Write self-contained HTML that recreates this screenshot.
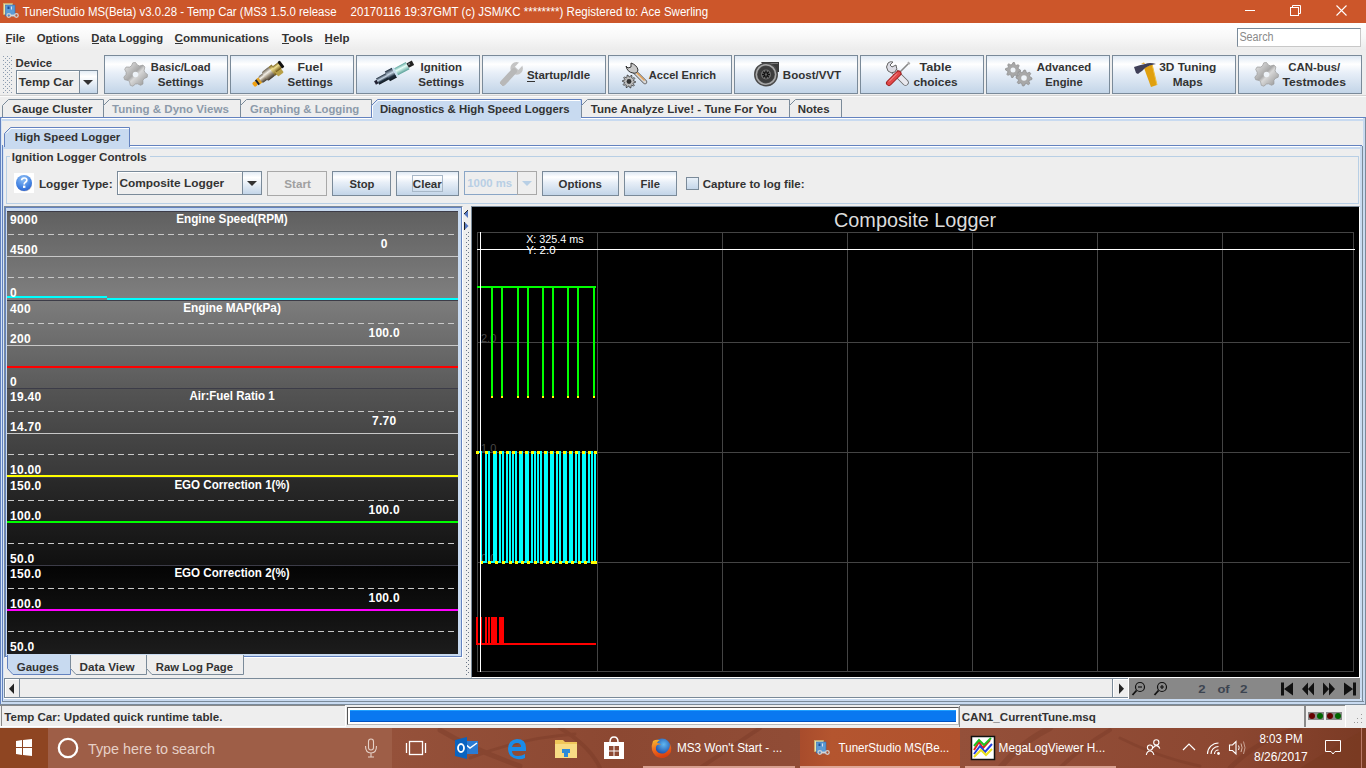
<!DOCTYPE html><html><head><meta charset="utf-8"><style>
html,body{margin:0;padding:0;}
body{width:1366px;height:768px;overflow:hidden;position:relative;background:#eeeeee;font-family:"Liberation Sans",sans-serif;font-size:12px;color:#333;}
div{position:absolute;box-sizing:border-box;}
svg{position:absolute;overflow:visible;}
.btn{border:1px solid #7a8a99;background:linear-gradient(to bottom,#dfe9f4 0%,#ffffff 22%,#e8eff8 45%,#c3d5e8 100%);}
</style></head><body>
<div style="left:0px;top:0px;width:1366px;height:23px;background:#cc562a;"></div>
<svg style="left:3px;top:3px" width="16" height="16" viewBox="0 0 16 16">
<rect x="0.5" y="0.5" width="9" height="11" fill="#efe3a8" stroke="#c9b870" stroke-width="0.6"/><rect x="2.5" y="2" width="9.5" height="11" fill="#5b9bd5" stroke="#2f6db5" stroke-width="0.6"/>
<rect x="4.5" y="3.5" width="2" height="2.5" fill="#1f4f98"/><rect x="8" y="3.5" width="1" height="3" fill="#dde"/>
<path d="M7 12.5 h5" stroke="#d8d8d8" stroke-width="1.8"/><circle cx="5.8" cy="12.5" r="1.8" fill="none" stroke="#d0d0d0" stroke-width="1.3"/><circle cx="13.4" cy="12.5" r="1.8" fill="none" stroke="#d0d0d0" stroke-width="1.3"/></svg>
<div style="left:1245px;top:10px;width:10px;height:1px;background:#fff;"></div>
<svg style="left:1290px;top:5px" width="12" height="12"><rect x="0.5" y="2.5" width="8" height="8" fill="none" stroke="#fff"/><path d="M2.5 2.5 V0.5 H10.5 V8.5 H8.5" fill="none" stroke="#fff"/></svg>
<svg style="left:1336px;top:5px" width="12" height="12"><path d="M0.5 0.5 L10.5 10.5 M10.5 0.5 L0.5 10.5" stroke="#fff" stroke-width="1.1"/></svg>
<div style="left:0px;top:23px;width:1366px;height:27px;background:linear-gradient(to bottom,#ffffff 0%,#f8f8f8 50%,#ececec 100%);"></div>
<div style="left:6px;top:43px;width:5px;height:1px;background:#333;"></div>
<div style="left:47px;top:43px;width:6px;height:1px;background:#333;"></div>
<div style="left:92px;top:43px;width:7px;height:1px;background:#333;"></div>
<div style="left:175px;top:43px;width:8px;height:1px;background:#333;"></div>
<div style="left:282px;top:43px;width:7px;height:1px;background:#333;"></div>
<div style="left:325px;top:43px;width:7px;height:1px;background:#333;"></div>
<div style="left:1237px;top:28px;width:124px;height:19px;background:#fff;border:1px solid #7a8a99;border-right-color:#c8c8c8;border-bottom-color:#c8c8c8;"></div>
<svg style="left:2px;top:55px" width="12" height="39"><rect x="1" y="1" width="1" height="1" fill="#8c9cb0"/><rect x="5" y="1" width="1" height="1" fill="#8c9cb0"/><rect x="9" y="1" width="1" height="1" fill="#8c9cb0"/><rect x="3" y="3" width="1" height="1" fill="#8c9cb0"/><rect x="7" y="3" width="1" height="1" fill="#8c9cb0"/><rect x="1" y="5" width="1" height="1" fill="#8c9cb0"/><rect x="5" y="5" width="1" height="1" fill="#8c9cb0"/><rect x="9" y="5" width="1" height="1" fill="#8c9cb0"/><rect x="3" y="7" width="1" height="1" fill="#8c9cb0"/><rect x="7" y="7" width="1" height="1" fill="#8c9cb0"/><rect x="1" y="9" width="1" height="1" fill="#8c9cb0"/><rect x="5" y="9" width="1" height="1" fill="#8c9cb0"/><rect x="9" y="9" width="1" height="1" fill="#8c9cb0"/><rect x="3" y="11" width="1" height="1" fill="#8c9cb0"/><rect x="7" y="11" width="1" height="1" fill="#8c9cb0"/><rect x="1" y="13" width="1" height="1" fill="#8c9cb0"/><rect x="5" y="13" width="1" height="1" fill="#8c9cb0"/><rect x="9" y="13" width="1" height="1" fill="#8c9cb0"/><rect x="3" y="15" width="1" height="1" fill="#8c9cb0"/><rect x="7" y="15" width="1" height="1" fill="#8c9cb0"/><rect x="1" y="17" width="1" height="1" fill="#8c9cb0"/><rect x="5" y="17" width="1" height="1" fill="#8c9cb0"/><rect x="9" y="17" width="1" height="1" fill="#8c9cb0"/><rect x="3" y="19" width="1" height="1" fill="#8c9cb0"/><rect x="7" y="19" width="1" height="1" fill="#8c9cb0"/><rect x="1" y="21" width="1" height="1" fill="#8c9cb0"/><rect x="5" y="21" width="1" height="1" fill="#8c9cb0"/><rect x="9" y="21" width="1" height="1" fill="#8c9cb0"/><rect x="3" y="23" width="1" height="1" fill="#8c9cb0"/><rect x="7" y="23" width="1" height="1" fill="#8c9cb0"/><rect x="1" y="25" width="1" height="1" fill="#8c9cb0"/><rect x="5" y="25" width="1" height="1" fill="#8c9cb0"/><rect x="9" y="25" width="1" height="1" fill="#8c9cb0"/><rect x="3" y="27" width="1" height="1" fill="#8c9cb0"/><rect x="7" y="27" width="1" height="1" fill="#8c9cb0"/><rect x="1" y="29" width="1" height="1" fill="#8c9cb0"/><rect x="5" y="29" width="1" height="1" fill="#8c9cb0"/><rect x="9" y="29" width="1" height="1" fill="#8c9cb0"/><rect x="3" y="31" width="1" height="1" fill="#8c9cb0"/><rect x="7" y="31" width="1" height="1" fill="#8c9cb0"/><rect x="1" y="33" width="1" height="1" fill="#8c9cb0"/><rect x="5" y="33" width="1" height="1" fill="#8c9cb0"/><rect x="9" y="33" width="1" height="1" fill="#8c9cb0"/><rect x="3" y="35" width="1" height="1" fill="#8c9cb0"/><rect x="7" y="35" width="1" height="1" fill="#8c9cb0"/><rect x="1" y="37" width="1" height="1" fill="#8c9cb0"/><rect x="5" y="37" width="1" height="1" fill="#8c9cb0"/><rect x="9" y="37" width="1" height="1" fill="#8c9cb0"/></svg>
<div style="left:16px;top:70px;width:64px;height:24px;background:#eeeeee;border:1px solid #7a8a99;"></div>
<div style="left:17px;top:71px;width:62px;height:1px;background:#fff;"></div>
<div style="left:17px;top:71px;width:1px;height:22px;background:#fff;"></div>
<div style="left:79px;top:70px;width:19px;height:24px;border:1px solid #7a8a99;background:linear-gradient(to bottom,#e3ecf5,#fff 25%,#c4d6e9);"></div>
<svg style="left:83px;top:80px" width="11" height="6"><path d="M0 0 H10 L5 5 Z" fill="#333"/></svg>
<div class="btn" style="left:104px;top:55px;width:124px;height:39px;"></div>
<svg style="left:123px;top:62px" width="25" height="25"><defs><linearGradient id="gg0" x1="0" y1="0" x2="1" y2="1"><stop offset="0" stop-color="#f0f0f0"/><stop offset="0.45" stop-color="#a8a8a8"/><stop offset="0.55" stop-color="#d8d8d8"/><stop offset="1" stop-color="#8a8a8a"/></linearGradient></defs><polygon points="24.5,12.5 24.2,15.2 21.1,16.6 19.9,18.4 20.0,21.9 17.7,23.3 14.6,21.8 12.5,22.0 9.8,24.2 7.3,23.3 6.6,19.9 5.1,18.4 1.7,17.7 0.8,15.2 3.0,12.5 3.2,10.4 1.7,7.3 3.1,5.0 6.6,5.1 8.4,3.9 9.8,0.8 12.5,0.5 14.6,3.2 16.6,3.9 20.0,3.1 21.9,5.0 21.1,8.4 21.8,10.4" fill="url(#gg0)" stroke="#999" stroke-width="0.7"/><circle cx="12.5" cy="12.5" r="2.8" fill="#eef3f8"/></svg>
<div class="btn" style="left:230px;top:55px;width:124px;height:39px;"></div>
<svg style="left:248px;top:58px" width="40" height="32"><defs><linearGradient id="inj" x1="0" y1="0" x2="0" y2="1"><stop offset="0" stop-color="#6a6050"/><stop offset="0.35" stop-color="#f4f0e8"/><stop offset="0.6" stop-color="#a89c88"/><stop offset="1" stop-color="#3a3228"/></linearGradient><linearGradient id="brs" x1="0" y1="0" x2="0" y2="1"><stop offset="0" stop-color="#7a6420"/><stop offset="0.35" stop-color="#f0e090"/><stop offset="1" stop-color="#6a5010"/></linearGradient></defs><g transform="translate(7,26) rotate(-37)"><rect x="-2" y="-2.5" width="4" height="5" rx="1.5" fill="#f0a010"/><rect x="2" y="-3" width="2.5" height="6" fill="#222"/><rect x="4" y="-3.2" width="3" height="6.4" fill="#e0a020"/><rect x="6.5" y="-4" width="7" height="8" rx="2" fill="url(#inj)"/><rect x="12" y="-5.5" width="10" height="11" rx="2" fill="url(#inj)"/><rect x="21" y="-5.5" width="4" height="11" fill="url(#brs)"/><rect x="23" y="2" width="7" height="6" rx="1" fill="#b8a048"/><rect x="24" y="-3.5" width="8" height="7" fill="url(#brs)"/><rect x="31" y="-4" width="3" height="8" rx="1" fill="#111"/></g></svg>
<div class="btn" style="left:356px;top:55px;width:124px;height:39px;"></div>
<svg style="left:371px;top:58px" width="46" height="32"><defs><linearGradient id="spk" x1="0" y1="0" x2="0" y2="1"><stop offset="0" stop-color="#1a2838"/><stop offset="0.4" stop-color="#c8d8e8"/><stop offset="0.7" stop-color="#203040"/><stop offset="1" stop-color="#101820"/></linearGradient><linearGradient id="ins" x1="0" y1="0" x2="0" y2="1"><stop offset="0" stop-color="#60a8a0"/><stop offset="0.4" stop-color="#e8fff8"/><stop offset="1" stop-color="#58a098"/></linearGradient></defs><g transform="translate(4,25) rotate(-28)"><rect x="0" y="-2" width="3" height="4" fill="#223"/><rect x="3" y="-3.5" width="12" height="7" fill="url(#spk)"/><rect x="14" y="-5.5" width="8" height="11" fill="url(#spk)"/><rect x="22" y="-5" width="2" height="10" fill="#c8e0f0"/><rect x="24" y="-4" width="13" height="8" fill="url(#ins)"/><rect x="37" y="-2.5" width="6" height="5" fill="#222"/><rect x="38" y="-1.5" width="2" height="1.5" fill="#888"/></g></svg>
<div class="btn" style="left:482px;top:55px;width:124px;height:39px;"></div>
<svg style="left:494px;top:58px" width="32" height="32"><defs><linearGradient id="wr" x1="0" y1="0" x2="1" y2="1"><stop offset="0" stop-color="#e0e0e0"/><stop offset="1" stop-color="#9a9a9a"/></linearGradient><mask id="wm"><rect x="-20" y="-20" width="60" height="40" fill="#fff"/><rect x="20" y="-2.3" width="10" height="4.6" fill="#000"/></mask></defs><g transform="translate(9,25) rotate(-47)" mask="url(#wm)"><path d="M0 0 H16" stroke="url(#wr)" stroke-width="6" stroke-linecap="round"/><circle cx="20" cy="0" r="6.3" fill="#c4c4c4"/><path d="M0 0 H16" stroke="#b8b8b8" stroke-width="6" stroke-linecap="round"/></g></svg>
<div class="btn" style="left:608px;top:55px;width:124px;height:39px;"></div>
<svg style="left:622px;top:61px" width="26" height="28"><path d="M13 11 L23 21" stroke="#555" stroke-width="4.5" stroke-linecap="round"/><path d="M13 11 L23 21" stroke="#d8d8d8" stroke-width="3" stroke-linecap="round"/><path d="M14.5 11.5 L22.5 19.5" stroke="#e8a050" stroke-width="1.2"/><path d="M4 5 Q5 11 11 12 Q15 13 16 9 Q15 4 9 2 L9 6 L6 7 Z" fill="#c8c8c8" stroke="#333" stroke-width="1"/><polygon points="13.5,20.5 13.4,21.5 11.4,21.9 11.1,22.6 12.3,24.3 11.6,25.1 9.7,24.2 9.1,24.6 9.0,26.7 8.0,26.9 7.0,25.1 6.3,25.0 5.0,26.7 4.0,26.3 4.3,24.2 3.7,23.8 1.7,24.3 1.2,23.5 2.6,21.9 2.5,21.2 0.5,20.5 0.6,19.5 2.6,19.1 2.9,18.4 1.7,16.7 2.4,15.9 4.3,16.8 4.9,16.4 5.0,14.3 6.0,14.1 7.0,15.9 7.7,16.0 9.0,14.3 10.0,14.7 9.7,16.8 10.3,17.2 12.3,16.7 12.8,17.5 11.4,19.1 11.5,19.8" fill="#bdbdbd" stroke="#222" stroke-width="0.7"/><circle cx="7" cy="20.5" r="2.4" fill="#333"/></svg>
<div class="btn" style="left:734px;top:55px;width:124px;height:39px;"></div>
<svg style="left:752px;top:61px" width="28" height="26"><path d="M9 1 H27 V11 H16 Z" fill="#3a3a3a"/><path d="M12 2.5 H26" stroke="#777" stroke-width="1"/><circle cx="14" cy="13.5" r="12" fill="#4a4a4a"/><circle cx="14" cy="13.5" r="9.7" fill="none" stroke="#a8a8a8" stroke-width="1.6"/><circle cx="14" cy="13.5" r="8.2" fill="#3c3c3c"/><circle cx="14" cy="13.5" r="5" fill="#707070"/><path d="M14 9.5 V17.5 M10 13.5 H18 M11.2 10.7 L16.8 16.3 M16.8 10.7 L11.2 16.3" stroke="#111" stroke-width="1.4"/><circle cx="14" cy="13.5" r="1.2" fill="#666"/></svg>
<div class="btn" style="left:860px;top:55px;width:124px;height:39px;"></div>
<svg style="left:882px;top:58px" width="32" height="32"><path d="M11 12 L23.5 24.5" stroke="#666" stroke-width="6.5" stroke-linecap="round"/><path d="M11 12 L23.5 24.5" stroke="#e8e8ee" stroke-width="5" stroke-linecap="round"/><path d="M6 5 Q3 9 6 13 Q9 16 13 14 Q16 11 14 7 L10 9 L8 7 L11 4 Q8 3 6 5 Z" fill="#dcdce4" stroke="#666" stroke-width="1"/><path d="M17 15 L26 6" stroke="#888" stroke-width="1.6"/><path d="M26 6 L27.5 4.5" stroke="#aaa" stroke-width="2.5"/><path d="M16.5 15.5 L7 25" stroke="#a02020" stroke-width="6" stroke-linecap="round"/><path d="M16.5 15.5 L7 25" stroke="#e04848" stroke-width="4" stroke-linecap="round"/><path d="M15 15.5 L7 23.5" stroke="#f8a0a0" stroke-width="1"/></svg>
<div class="btn" style="left:986px;top:55px;width:124px;height:39px;"></div>
<svg style="left:1005px;top:62px" width="29" height="25"><polygon points="15.5,8.0 15.4,9.5 13.1,10.1 12.6,11.1 13.3,13.3 12.2,14.2 10.1,13.1 9.1,13.4 8.0,15.5 6.5,15.4 5.9,13.1 4.9,12.6 2.7,13.3 1.8,12.2 2.9,10.1 2.6,9.1 0.5,8.0 0.6,6.5 2.9,5.9 3.4,4.9 2.7,2.7 3.8,1.8 5.9,2.9 6.9,2.6 8.0,0.5 9.5,0.6 10.1,2.9 11.1,3.4 13.3,2.7 14.2,3.8 13.1,5.9 13.4,6.9" fill="#a8a8a8" stroke="#888" stroke-width="0.7"/><circle cx="8" cy="8" r="2.5" fill="#eef3f8"/><polygon points="27.0,16.0 26.8,17.6 24.5,18.3 24.0,19.3 24.7,21.7 23.4,22.7 21.3,21.5 20.2,21.9 19.0,24.0 17.4,23.8 16.7,21.5 15.7,21.0 13.3,21.7 12.3,20.4 13.5,18.3 13.1,17.2 11.0,16.0 11.2,14.4 13.5,13.7 14.0,12.7 13.3,10.3 14.6,9.3 16.7,10.5 17.8,10.1 19.0,8.0 20.6,8.2 21.3,10.5 22.3,11.0 24.7,10.3 25.7,11.6 24.5,13.7 24.9,14.8" fill="#a8a8a8" stroke="#888" stroke-width="0.7"/><circle cx="19" cy="16" r="2.8" fill="#eef3f8"/></svg>
<div class="btn" style="left:1112px;top:55px;width:124px;height:39px;"></div>
<svg style="left:1128px;top:58px" width="36" height="32"><path d="M16 10 L24 6 L29 27 L23 29 Z" fill="#e0a010"/><path d="M24 6 L29 27" stroke="#f0c040" stroke-width="1"/><path d="M6 9 Q12 7 17 6 Q22 4 28 6 Q21 7 17 10 L14 13 Q11 15 10 16 L8 15 Z" fill="#404058"/><path d="M13 5.5 L16 4.5 L17 6" fill="#e0a010"/></svg>
<div class="btn" style="left:1238px;top:55px;width:124px;height:39px;"></div>
<svg style="left:1254px;top:62px" width="25" height="25"><defs><linearGradient id="gg9" x1="0" y1="0" x2="1" y2="1"><stop offset="0" stop-color="#f0f0f0"/><stop offset="0.45" stop-color="#a8a8a8"/><stop offset="0.55" stop-color="#d8d8d8"/><stop offset="1" stop-color="#8a8a8a"/></linearGradient></defs><polygon points="24.5,12.5 24.2,15.2 21.1,16.6 19.9,18.4 20.0,21.9 17.7,23.3 14.6,21.8 12.5,22.0 9.8,24.2 7.3,23.3 6.6,19.9 5.1,18.4 1.7,17.7 0.8,15.2 3.0,12.5 3.2,10.4 1.7,7.3 3.1,5.0 6.6,5.1 8.4,3.9 9.8,0.8 12.5,0.5 14.6,3.2 16.6,3.9 20.0,3.1 21.9,5.0 21.1,8.4 21.8,10.4" fill="url(#gg9)" stroke="#999" stroke-width="0.7"/><circle cx="12.5" cy="12.5" r="2.8" fill="#eef3f8"/></svg>
<div style="left:527px;top:81px;width:8px;height:1px;background:#333;"></div>
<div style="left:0px;top:95px;width:1366px;height:1px;background:#d4d4d4;"></div>
<div style="left:0px;top:96px;width:1366px;height:1px;background:#fbfbfb;"></div>
<svg style="left:2px;top:99px" width="102" height="19"><path d="M0.5 19 V6.5 L6.5 0.5 H101.5 V19" fill="#eeeeee" stroke="#7a8a99"/></svg>
<svg style="left:103px;top:99px" width="138" height="19"><path d="M0.5 19 V6.5 L6.5 0.5 H137.5 V19" fill="#eeeeee" stroke="#7a8a99"/></svg>
<svg style="left:240px;top:99px" width="132" height="19"><path d="M0.5 19 V6.5 L6.5 0.5 H131.5 V19" fill="#eeeeee" stroke="#7a8a99"/></svg>
<svg style="left:371px;top:99px" width="211" height="19"><path d="M0.5 19 V6.5 L6.5 0.5 H210.5 V19" fill="#c8daf0" stroke="#6382bf"/><path d="M1.5 18 V7 L7 1.5 H209" fill="none" stroke="#fff"/></svg>
<svg style="left:581px;top:99px" width="209" height="19"><path d="M0.5 19 V6.5 L6.5 0.5 H208.5 V19" fill="#eeeeee" stroke="#7a8a99"/></svg>
<svg style="left:789px;top:99px" width="53" height="19"><path d="M0.5 19 V6.5 L6.5 0.5 H52.5 V19" fill="#eeeeee" stroke="#7a8a99"/></svg>
<div style="left:0px;top:117px;width:371px;height:1px;background:#6382bf;"></div>
<div style="left:581px;top:117px;width:785px;height:1px;background:#6382bf;"></div>
<div style="left:1px;top:118px;width:1365px;height:1px;background:#fff;"></div>
<div style="left:372px;top:117px;width:209px;height:2px;background:#c8daf0;"></div>
<div style="left:2px;top:119px;width:1364px;height:2px;background:#c8daf0;"></div>
<div style="left:0px;top:117px;width:1px;height:588px;background:#6382bf;"></div>
<div style="left:1px;top:118px;width:1px;height:586px;background:#d4e4f6;"></div>
<div style="left:1363px;top:118px;width:1px;height:587px;background:#c8daf0;"></div>
<div style="left:1364px;top:118px;width:1px;height:587px;background:#c8daf0;"></div>
<div style="left:1365px;top:118px;width:1px;height:587px;background:#7a8a99;"></div>
<div style="left:0px;top:704px;width:1366px;height:1px;background:#7a8a99;"></div>
<div style="left:2px;top:702px;width:1362px;height:2px;background:#c8daf0;"></div>
<div style="left:2px;top:701px;width:1362px;height:1px;background:#7a8a99;"></div>
<svg style="left:4px;top:127px" width="127" height="22"><path d="M0.5 22 V6.5 L6.5 0.5 H125.5 V22" fill="#c8daf0" stroke="#6382bf"/><path d="M1.5 22 V7 L7 1.5 H125" fill="none" stroke="#fff"/></svg>
<div style="left:2px;top:145px;width:1px;height:556px;background:#6382bf;"></div>
<div style="left:3px;top:146px;width:1px;height:555px;background:#d4e4f6;"></div>
<div style="left:130px;top:145px;width:1232px;height:1px;background:#6382bf;"></div>
<div style="left:130px;top:146px;width:1232px;height:1px;background:#fff;"></div>
<div style="left:3px;top:147px;width:1359px;height:2px;background:#c8daf0;"></div>
<div style="left:5px;top:133px;width:124px;height:16px;background:#c8daf0;"></div>
<div style="left:1360px;top:146px;width:1px;height:555px;background:#c8daf0;"></div>
<div style="left:1361px;top:146px;width:1px;height:555px;background:#c8daf0;"></div>
<div style="left:1362px;top:146px;width:1px;height:555px;background:#7a8a99;"></div>
<div style="left:4px;top:699px;width:1357px;height:2px;background:#c8daf0;"></div>
<div style="left:4px;top:698px;width:1357px;height:1px;background:#fff;"></div>
<div style="left:6px;top:156px;width:1353px;height:48px;border:1px solid #b8cfe5;"></div>
<div style="left:10px;top:150px;width:140px;height:12px;background:#eeeeee;"></div>
<div style="left:14px;top:173px;width:20px;height:20px;background:#fff;"></div>
<svg style="left:14px;top:173px" width="20" height="20"><defs><radialGradient id="hg" cx="0.45" cy="0.25" r="0.8"><stop offset="0" stop-color="#8fc0f6"/><stop offset="0.7" stop-color="#3f7fe0"/><stop offset="1" stop-color="#2e5fcc"/></radialGradient></defs><ellipse cx="10.5" cy="12" rx="7.5" ry="6.5" fill="#d8d4cc"/><circle cx="10" cy="10" r="8" fill="url(#hg)"/><path d="M7.6 7.3 Q7.8 5 10.2 5 Q12.8 5 12.8 7.2 Q12.8 8.6 11 9.6 Q10.2 10.1 10.2 11.4" fill="none" stroke="#fff" stroke-width="1.7"/><rect x="9" y="12.6" width="2.4" height="2.3" fill="#fff"/></svg>
<div style="left:117px;top:171px;width:126px;height:24px;background:#eeeeee;border:1px solid #7a8a99;"></div>
<div style="left:118px;top:172px;width:124px;height:1px;background:#fff;"></div>
<div style="left:118px;top:172px;width:1px;height:22px;background:#fff;"></div>
<div style="left:242px;top:171px;width:20px;height:24px;border:1px solid #7a8a99;background:linear-gradient(to bottom,#e3ecf5,#fff 25%,#c4d6e9);"></div>
<svg style="left:247px;top:181px" width="11" height="6"><path d="M0 0 H10 L5 5 Z" fill="#333"/></svg>
<div style="left:267px;top:171px;width:60px;height:25px;border:1px solid #a8a8a8;background:#eeeeee;"></div>
<div class="btn" style="left:332px;top:171px;width:59px;height:25px;"></div>
<div class="btn" style="left:396px;top:171px;width:63px;height:25px;"></div>
<div style="left:412px;top:175px;width:31px;height:17px;border:1px solid #a8b8c8;"></div>
<div style="left:464px;top:171px;width:54px;height:24px;border:1px solid #8aa6c6;background:#eeeeee;"></div>
<div style="left:517px;top:171px;width:20px;height:24px;border:1px solid #a8a8a8;background:#eeeeee;"></div>
<svg style="left:522px;top:181px" width="11" height="6"><path d="M0 0 H10 L5 5 Z" fill="#b8cfe5"/></svg>
<div class="btn" style="left:542px;top:171px;width:77px;height:25px;"></div>
<div class="btn" style="left:624px;top:171px;width:53px;height:25px;"></div>
<div style="left:686px;top:177px;width:13px;height:13px;border:1px solid #7a8a99;background:linear-gradient(to bottom,#e8f0f8,#c4d6e9);"></div>
<div style="left:4px;top:206px;width:459px;height:452px;border:1px solid #7a8a99;border-right-color:#fff;border-bottom-color:#fff;"></div>
<div style="left:5px;top:207px;width:457px;height:450px;border:1px solid #6382bf;"></div>
<div style="left:6px;top:208px;width:455px;height:448px;background:#c8daf0;"></div>
<div style="left:7px;top:211px;width:451px;height:90px;background:linear-gradient(to bottom,rgb(96,96,96),rgb(128,128,128));border-top:1px solid #3c3c48;"></div>
<div style="left:8px;top:234px;width:450px;height:1px;background:repeating-linear-gradient(to right,#c8c8c8 0 6px,transparent 6px 10px);"></div>
<div style="left:8px;top:277px;width:450px;height:1px;background:repeating-linear-gradient(to right,#c8c8c8 0 6px,transparent 6px 10px);"></div>
<div style="left:7px;top:256px;width:451px;height:1px;background:#c8c8c8;"></div>
<div style="left:7px;top:300px;width:451px;height:89px;background:linear-gradient(to bottom,rgb(124,124,124),rgb(90,90,90));border-top:1px solid #3c3c48;"></div>
<div style="left:8px;top:323px;width:450px;height:1px;background:repeating-linear-gradient(to right,#c8c8c8 0 6px,transparent 6px 10px);"></div>
<div style="left:8px;top:366px;width:450px;height:1px;background:repeating-linear-gradient(to right,#c8c8c8 0 6px,transparent 6px 10px);"></div>
<div style="left:7px;top:345px;width:451px;height:1px;background:#c8c8c8;"></div>
<div style="left:7px;top:388px;width:451px;height:90px;background:linear-gradient(to bottom,rgb(84,84,84),rgb(56,56,56));border-top:1px solid #3c3c48;"></div>
<div style="left:8px;top:411px;width:450px;height:1px;background:repeating-linear-gradient(to right,#c8c8c8 0 6px,transparent 6px 10px);"></div>
<div style="left:8px;top:454px;width:450px;height:1px;background:repeating-linear-gradient(to right,#c8c8c8 0 6px,transparent 6px 10px);"></div>
<div style="left:7px;top:433px;width:451px;height:1px;background:#c8c8c8;"></div>
<div style="left:7px;top:477px;width:451px;height:89px;background:linear-gradient(to bottom,rgb(42,42,42),rgb(16,16,16));border-top:1px solid #3c3c48;"></div>
<div style="left:8px;top:500px;width:450px;height:1px;background:repeating-linear-gradient(to right,#c8c8c8 0 6px,transparent 6px 10px);"></div>
<div style="left:8px;top:543px;width:450px;height:1px;background:repeating-linear-gradient(to right,#c8c8c8 0 6px,transparent 6px 10px);"></div>
<div style="left:7px;top:522px;width:451px;height:1px;background:#c8c8c8;"></div>
<div style="left:7px;top:565px;width:451px;height:89px;background:linear-gradient(to bottom,rgb(4,4,4),rgb(28,28,28));border-top:1px solid #3c3c48;"></div>
<div style="left:8px;top:588px;width:450px;height:1px;background:repeating-linear-gradient(to right,#c8c8c8 0 6px,transparent 6px 10px);"></div>
<div style="left:8px;top:631px;width:450px;height:1px;background:repeating-linear-gradient(to right,#c8c8c8 0 6px,transparent 6px 10px);"></div>
<div style="left:7px;top:610px;width:451px;height:1px;background:#c8c8c8;"></div>
<div style="left:7px;top:296px;width:100px;height:2px;background:#00ffff;"></div>
<div style="left:107px;top:298px;width:351px;height:2px;background:#00ffff;"></div>
<div style="left:7px;top:366px;width:451px;height:2px;background:#ff0000;"></div>
<div style="left:7px;top:475px;width:451px;height:2px;background:#ffff00;"></div>
<div style="left:7px;top:521px;width:451px;height:2px;background:#00ff00;"></div>
<div style="left:7px;top:609px;width:451px;height:2px;background:#ff00ff;"></div>
<svg style="left:7px;top:655px" width="64" height="21"><path d="M0.5 0 V13.5 L6 19.5 H63.5 V0" fill="#c8daf0" stroke="#6382bf"/></svg>
<svg style="left:70px;top:655px" width="77" height="21"><path d="M0.5 0 V13.5 L6 19.5 H76.5 V0" fill="#eeeeee" stroke="#7a8a99"/></svg>
<svg style="left:146px;top:655px" width="98" height="21"><path d="M0.5 0 V13.5 L6 19.5 H97.5 V0" fill="#eeeeee" stroke="#7a8a99"/></svg>
<div style="left:4px;top:678px;width:1126px;height:20px;border:1px solid #7a8a99;background:#eeeeee;"></div>
<div style="left:4px;top:698px;width:1126px;height:1px;background:#fff;"></div>
<div style="left:5px;top:679px;width:15px;height:18px;border-right:1px solid #7a8a99;background:#eeeeee;box-shadow:inset 1px 1px 0 #fff;"></div>
<svg style="left:8px;top:683px" width="8" height="12"><path d="M6 0.5 V11 L1 5.75 Z" fill="#222"/></svg>
<div style="left:1112px;top:678px;width:17px;height:20px;border:1px solid #7a8a99;background:#eeeeee;box-shadow:inset 1px 1px 0 #fff;"></div>
<div style="left:1128px;top:678px;width:1px;height:21px;background:#fff;"></div>
<svg style="left:1118px;top:683px" width="8" height="12"><path d="M1 0.5 V11 L6 5.75 Z" fill="#222"/></svg>
<svg style="left:463px;top:207px" width="8" height="470"><rect x="5" y="1" width="1" height="1" fill="#6a7686"/><rect x="3" y="3" width="1" height="1" fill="#6a7686"/><rect x="5" y="5" width="1" height="1" fill="#6a7686"/><rect x="3" y="7" width="1" height="1" fill="#6a7686"/><rect x="5" y="9" width="1" height="1" fill="#6a7686"/><rect x="3" y="11" width="1" height="1" fill="#6a7686"/><rect x="5" y="13" width="1" height="1" fill="#6a7686"/><rect x="3" y="15" width="1" height="1" fill="#6a7686"/><rect x="5" y="17" width="1" height="1" fill="#6a7686"/><rect x="3" y="19" width="1" height="1" fill="#6a7686"/><rect x="5" y="21" width="1" height="1" fill="#6a7686"/><rect x="3" y="23" width="1" height="1" fill="#6a7686"/><rect x="5" y="25" width="1" height="1" fill="#6a7686"/><rect x="3" y="27" width="1" height="1" fill="#6a7686"/><rect x="5" y="29" width="1" height="1" fill="#6a7686"/><rect x="3" y="31" width="1" height="1" fill="#6a7686"/><rect x="5" y="33" width="1" height="1" fill="#6a7686"/><rect x="3" y="35" width="1" height="1" fill="#6a7686"/><rect x="5" y="37" width="1" height="1" fill="#6a7686"/><rect x="3" y="39" width="1" height="1" fill="#6a7686"/><rect x="5" y="41" width="1" height="1" fill="#6a7686"/><rect x="3" y="43" width="1" height="1" fill="#6a7686"/><rect x="5" y="45" width="1" height="1" fill="#6a7686"/><rect x="3" y="47" width="1" height="1" fill="#6a7686"/><rect x="5" y="49" width="1" height="1" fill="#6a7686"/><rect x="3" y="51" width="1" height="1" fill="#6a7686"/><rect x="5" y="53" width="1" height="1" fill="#6a7686"/><rect x="3" y="55" width="1" height="1" fill="#6a7686"/><rect x="5" y="57" width="1" height="1" fill="#6a7686"/><rect x="3" y="59" width="1" height="1" fill="#6a7686"/><rect x="5" y="61" width="1" height="1" fill="#6a7686"/><rect x="3" y="63" width="1" height="1" fill="#6a7686"/><rect x="5" y="65" width="1" height="1" fill="#6a7686"/><rect x="3" y="67" width="1" height="1" fill="#6a7686"/><rect x="5" y="69" width="1" height="1" fill="#6a7686"/><rect x="3" y="71" width="1" height="1" fill="#6a7686"/><rect x="5" y="73" width="1" height="1" fill="#6a7686"/><rect x="3" y="75" width="1" height="1" fill="#6a7686"/><rect x="5" y="77" width="1" height="1" fill="#6a7686"/><rect x="3" y="79" width="1" height="1" fill="#6a7686"/><rect x="5" y="81" width="1" height="1" fill="#6a7686"/><rect x="3" y="83" width="1" height="1" fill="#6a7686"/><rect x="5" y="85" width="1" height="1" fill="#6a7686"/><rect x="3" y="87" width="1" height="1" fill="#6a7686"/><rect x="5" y="89" width="1" height="1" fill="#6a7686"/><rect x="3" y="91" width="1" height="1" fill="#6a7686"/><rect x="5" y="93" width="1" height="1" fill="#6a7686"/><rect x="3" y="95" width="1" height="1" fill="#6a7686"/><rect x="5" y="97" width="1" height="1" fill="#6a7686"/><rect x="3" y="99" width="1" height="1" fill="#6a7686"/><rect x="5" y="101" width="1" height="1" fill="#6a7686"/><rect x="3" y="103" width="1" height="1" fill="#6a7686"/><rect x="5" y="105" width="1" height="1" fill="#6a7686"/><rect x="3" y="107" width="1" height="1" fill="#6a7686"/><rect x="5" y="109" width="1" height="1" fill="#6a7686"/><rect x="3" y="111" width="1" height="1" fill="#6a7686"/><rect x="5" y="113" width="1" height="1" fill="#6a7686"/><rect x="3" y="115" width="1" height="1" fill="#6a7686"/><rect x="5" y="117" width="1" height="1" fill="#6a7686"/><rect x="3" y="119" width="1" height="1" fill="#6a7686"/><rect x="5" y="121" width="1" height="1" fill="#6a7686"/><rect x="3" y="123" width="1" height="1" fill="#6a7686"/><rect x="5" y="125" width="1" height="1" fill="#6a7686"/><rect x="3" y="127" width="1" height="1" fill="#6a7686"/><rect x="5" y="129" width="1" height="1" fill="#6a7686"/><rect x="3" y="131" width="1" height="1" fill="#6a7686"/><rect x="5" y="133" width="1" height="1" fill="#6a7686"/><rect x="3" y="135" width="1" height="1" fill="#6a7686"/><rect x="5" y="137" width="1" height="1" fill="#6a7686"/><rect x="3" y="139" width="1" height="1" fill="#6a7686"/><rect x="5" y="141" width="1" height="1" fill="#6a7686"/><rect x="3" y="143" width="1" height="1" fill="#6a7686"/><rect x="5" y="145" width="1" height="1" fill="#6a7686"/><rect x="3" y="147" width="1" height="1" fill="#6a7686"/><rect x="5" y="149" width="1" height="1" fill="#6a7686"/><rect x="3" y="151" width="1" height="1" fill="#6a7686"/><rect x="5" y="153" width="1" height="1" fill="#6a7686"/><rect x="3" y="155" width="1" height="1" fill="#6a7686"/><rect x="5" y="157" width="1" height="1" fill="#6a7686"/><rect x="3" y="159" width="1" height="1" fill="#6a7686"/><rect x="5" y="161" width="1" height="1" fill="#6a7686"/><rect x="3" y="163" width="1" height="1" fill="#6a7686"/><rect x="5" y="165" width="1" height="1" fill="#6a7686"/><rect x="3" y="167" width="1" height="1" fill="#6a7686"/><rect x="5" y="169" width="1" height="1" fill="#6a7686"/><rect x="3" y="171" width="1" height="1" fill="#6a7686"/><rect x="5" y="173" width="1" height="1" fill="#6a7686"/><rect x="3" y="175" width="1" height="1" fill="#6a7686"/><rect x="5" y="177" width="1" height="1" fill="#6a7686"/><rect x="3" y="179" width="1" height="1" fill="#6a7686"/><rect x="5" y="181" width="1" height="1" fill="#6a7686"/><rect x="3" y="183" width="1" height="1" fill="#6a7686"/><rect x="5" y="185" width="1" height="1" fill="#6a7686"/><rect x="3" y="187" width="1" height="1" fill="#6a7686"/><rect x="5" y="189" width="1" height="1" fill="#6a7686"/><rect x="3" y="191" width="1" height="1" fill="#6a7686"/><rect x="5" y="193" width="1" height="1" fill="#6a7686"/><rect x="3" y="195" width="1" height="1" fill="#6a7686"/><rect x="5" y="197" width="1" height="1" fill="#6a7686"/><rect x="3" y="199" width="1" height="1" fill="#6a7686"/><rect x="5" y="201" width="1" height="1" fill="#6a7686"/><rect x="3" y="203" width="1" height="1" fill="#6a7686"/><rect x="5" y="205" width="1" height="1" fill="#6a7686"/><rect x="3" y="207" width="1" height="1" fill="#6a7686"/><rect x="5" y="209" width="1" height="1" fill="#6a7686"/><rect x="3" y="211" width="1" height="1" fill="#6a7686"/><rect x="5" y="213" width="1" height="1" fill="#6a7686"/><rect x="3" y="215" width="1" height="1" fill="#6a7686"/><rect x="5" y="217" width="1" height="1" fill="#6a7686"/><rect x="3" y="219" width="1" height="1" fill="#6a7686"/><rect x="5" y="221" width="1" height="1" fill="#6a7686"/><rect x="3" y="223" width="1" height="1" fill="#6a7686"/><rect x="5" y="225" width="1" height="1" fill="#6a7686"/><rect x="3" y="227" width="1" height="1" fill="#6a7686"/><rect x="5" y="229" width="1" height="1" fill="#6a7686"/><rect x="3" y="231" width="1" height="1" fill="#6a7686"/><rect x="5" y="233" width="1" height="1" fill="#6a7686"/><rect x="3" y="235" width="1" height="1" fill="#6a7686"/><rect x="5" y="237" width="1" height="1" fill="#6a7686"/><rect x="3" y="239" width="1" height="1" fill="#6a7686"/><rect x="5" y="241" width="1" height="1" fill="#6a7686"/><rect x="3" y="243" width="1" height="1" fill="#6a7686"/><rect x="5" y="245" width="1" height="1" fill="#6a7686"/><rect x="3" y="247" width="1" height="1" fill="#6a7686"/><rect x="5" y="249" width="1" height="1" fill="#6a7686"/><rect x="3" y="251" width="1" height="1" fill="#6a7686"/><rect x="5" y="253" width="1" height="1" fill="#6a7686"/><rect x="3" y="255" width="1" height="1" fill="#6a7686"/><rect x="5" y="257" width="1" height="1" fill="#6a7686"/><rect x="3" y="259" width="1" height="1" fill="#6a7686"/><rect x="5" y="261" width="1" height="1" fill="#6a7686"/><rect x="3" y="263" width="1" height="1" fill="#6a7686"/><rect x="5" y="265" width="1" height="1" fill="#6a7686"/><rect x="3" y="267" width="1" height="1" fill="#6a7686"/><rect x="5" y="269" width="1" height="1" fill="#6a7686"/><rect x="3" y="271" width="1" height="1" fill="#6a7686"/><rect x="5" y="273" width="1" height="1" fill="#6a7686"/><rect x="3" y="275" width="1" height="1" fill="#6a7686"/><rect x="5" y="277" width="1" height="1" fill="#6a7686"/><rect x="3" y="279" width="1" height="1" fill="#6a7686"/><rect x="5" y="281" width="1" height="1" fill="#6a7686"/><rect x="3" y="283" width="1" height="1" fill="#6a7686"/><rect x="5" y="285" width="1" height="1" fill="#6a7686"/><rect x="3" y="287" width="1" height="1" fill="#6a7686"/><rect x="5" y="289" width="1" height="1" fill="#6a7686"/><rect x="3" y="291" width="1" height="1" fill="#6a7686"/><rect x="5" y="293" width="1" height="1" fill="#6a7686"/><rect x="3" y="295" width="1" height="1" fill="#6a7686"/><rect x="5" y="297" width="1" height="1" fill="#6a7686"/><rect x="3" y="299" width="1" height="1" fill="#6a7686"/><rect x="5" y="301" width="1" height="1" fill="#6a7686"/><rect x="3" y="303" width="1" height="1" fill="#6a7686"/><rect x="5" y="305" width="1" height="1" fill="#6a7686"/><rect x="3" y="307" width="1" height="1" fill="#6a7686"/><rect x="5" y="309" width="1" height="1" fill="#6a7686"/><rect x="3" y="311" width="1" height="1" fill="#6a7686"/><rect x="5" y="313" width="1" height="1" fill="#6a7686"/><rect x="3" y="315" width="1" height="1" fill="#6a7686"/><rect x="5" y="317" width="1" height="1" fill="#6a7686"/><rect x="3" y="319" width="1" height="1" fill="#6a7686"/><rect x="5" y="321" width="1" height="1" fill="#6a7686"/><rect x="3" y="323" width="1" height="1" fill="#6a7686"/><rect x="5" y="325" width="1" height="1" fill="#6a7686"/><rect x="3" y="327" width="1" height="1" fill="#6a7686"/><rect x="5" y="329" width="1" height="1" fill="#6a7686"/><rect x="3" y="331" width="1" height="1" fill="#6a7686"/><rect x="5" y="333" width="1" height="1" fill="#6a7686"/><rect x="3" y="335" width="1" height="1" fill="#6a7686"/><rect x="5" y="337" width="1" height="1" fill="#6a7686"/><rect x="3" y="339" width="1" height="1" fill="#6a7686"/><rect x="5" y="341" width="1" height="1" fill="#6a7686"/><rect x="3" y="343" width="1" height="1" fill="#6a7686"/><rect x="5" y="345" width="1" height="1" fill="#6a7686"/><rect x="3" y="347" width="1" height="1" fill="#6a7686"/><rect x="5" y="349" width="1" height="1" fill="#6a7686"/><rect x="3" y="351" width="1" height="1" fill="#6a7686"/><rect x="5" y="353" width="1" height="1" fill="#6a7686"/><rect x="3" y="355" width="1" height="1" fill="#6a7686"/><rect x="5" y="357" width="1" height="1" fill="#6a7686"/><rect x="3" y="359" width="1" height="1" fill="#6a7686"/><rect x="5" y="361" width="1" height="1" fill="#6a7686"/><rect x="3" y="363" width="1" height="1" fill="#6a7686"/><rect x="5" y="365" width="1" height="1" fill="#6a7686"/><rect x="3" y="367" width="1" height="1" fill="#6a7686"/><rect x="5" y="369" width="1" height="1" fill="#6a7686"/><rect x="3" y="371" width="1" height="1" fill="#6a7686"/><rect x="5" y="373" width="1" height="1" fill="#6a7686"/><rect x="3" y="375" width="1" height="1" fill="#6a7686"/><rect x="5" y="377" width="1" height="1" fill="#6a7686"/><rect x="3" y="379" width="1" height="1" fill="#6a7686"/><rect x="5" y="381" width="1" height="1" fill="#6a7686"/><rect x="3" y="383" width="1" height="1" fill="#6a7686"/><rect x="5" y="385" width="1" height="1" fill="#6a7686"/><rect x="3" y="387" width="1" height="1" fill="#6a7686"/><rect x="5" y="389" width="1" height="1" fill="#6a7686"/><rect x="3" y="391" width="1" height="1" fill="#6a7686"/><rect x="5" y="393" width="1" height="1" fill="#6a7686"/><rect x="3" y="395" width="1" height="1" fill="#6a7686"/><rect x="5" y="397" width="1" height="1" fill="#6a7686"/><rect x="3" y="399" width="1" height="1" fill="#6a7686"/><rect x="5" y="401" width="1" height="1" fill="#6a7686"/><rect x="3" y="403" width="1" height="1" fill="#6a7686"/><rect x="5" y="405" width="1" height="1" fill="#6a7686"/><rect x="3" y="407" width="1" height="1" fill="#6a7686"/><rect x="5" y="409" width="1" height="1" fill="#6a7686"/><rect x="3" y="411" width="1" height="1" fill="#6a7686"/><rect x="5" y="413" width="1" height="1" fill="#6a7686"/><rect x="3" y="415" width="1" height="1" fill="#6a7686"/><rect x="5" y="417" width="1" height="1" fill="#6a7686"/><rect x="3" y="419" width="1" height="1" fill="#6a7686"/><rect x="5" y="421" width="1" height="1" fill="#6a7686"/><rect x="3" y="423" width="1" height="1" fill="#6a7686"/><rect x="5" y="425" width="1" height="1" fill="#6a7686"/><rect x="3" y="427" width="1" height="1" fill="#6a7686"/><rect x="5" y="429" width="1" height="1" fill="#6a7686"/><rect x="3" y="431" width="1" height="1" fill="#6a7686"/><rect x="5" y="433" width="1" height="1" fill="#6a7686"/><rect x="3" y="435" width="1" height="1" fill="#6a7686"/><rect x="5" y="437" width="1" height="1" fill="#6a7686"/><rect x="3" y="439" width="1" height="1" fill="#6a7686"/><rect x="5" y="441" width="1" height="1" fill="#6a7686"/><rect x="3" y="443" width="1" height="1" fill="#6a7686"/><rect x="5" y="445" width="1" height="1" fill="#6a7686"/><rect x="3" y="447" width="1" height="1" fill="#6a7686"/><rect x="5" y="449" width="1" height="1" fill="#6a7686"/><rect x="3" y="451" width="1" height="1" fill="#6a7686"/><rect x="5" y="453" width="1" height="1" fill="#6a7686"/><rect x="3" y="455" width="1" height="1" fill="#6a7686"/><rect x="5" y="457" width="1" height="1" fill="#6a7686"/><rect x="3" y="459" width="1" height="1" fill="#6a7686"/><rect x="5" y="461" width="1" height="1" fill="#6a7686"/><rect x="3" y="463" width="1" height="1" fill="#6a7686"/><rect x="5" y="465" width="1" height="1" fill="#6a7686"/><rect x="3" y="467" width="1" height="1" fill="#6a7686"/><rect x="0" y="0" width="8" height="25" fill="#eeeeee"/><path d="M1 7 L5 3 V11 Z" fill="#5577c0"/><path d="M1 7 L5 3" stroke="#222" stroke-width="1"/><path d="M1.5 15 V23 L5.5 19 Z" fill="#5577c0"/><path d="M1.5 15 V23" stroke="#222" stroke-width="1"/></svg>
<div style="left:471px;top:206px;width:889px;height:472px;border:1px solid #7a8a99;border-right:1px solid #fff;border-bottom:1px solid #fff;"></div>
<div style="left:472px;top:207px;width:887px;height:470px;background:#000;"></div>
<svg style="left:0;top:0" width="1366" height="768" shape-rendering="crispEdges"><rect x="477.5" y="232.5" width="876" height="439" fill="none" stroke="#444444"/><path d="M597.5 232 V672" stroke="#444444"/><path d="M722.5 232 V672" stroke="#444444"/><path d="M847.5 232 V672" stroke="#444444"/><path d="M972.5 232 V672" stroke="#444444"/><path d="M1097.5 232 V672" stroke="#444444"/><path d="M1222.5 232 V672" stroke="#444444"/><path d="M477 342.5 H1350" stroke="#444444"/><path d="M477 452.5 H1350" stroke="#444444"/><path d="M477 562.5 H1350" stroke="#444444"/><text x="481" y="342" font-family="Liberation Sans" font-size="11" fill="#484848">2.0</text><text x="481" y="452" font-family="Liberation Sans" font-size="11" fill="#484848">1.0</text><text x="481" y="562" font-family="Liberation Sans" font-size="11" fill="#484848">0.0</text><rect x="477" y="286" width="119" height="2" fill="#00ff00"/><rect x="491" y="286" width="2" height="111" fill="#00ff00"/><rect x="491" y="396" width="2" height="2" fill="#ffff00"/><rect x="501" y="286" width="2" height="111" fill="#00ff00"/><rect x="501" y="396" width="2" height="2" fill="#ffff00"/><rect x="517" y="286" width="2" height="111" fill="#00ff00"/><rect x="517" y="396" width="2" height="2" fill="#ffff00"/><rect x="527" y="286" width="2" height="111" fill="#00ff00"/><rect x="527" y="396" width="2" height="2" fill="#ffff00"/><rect x="542" y="286" width="2" height="111" fill="#00ff00"/><rect x="542" y="396" width="2" height="2" fill="#ffff00"/><rect x="552" y="286" width="2" height="111" fill="#00ff00"/><rect x="552" y="396" width="2" height="2" fill="#ffff00"/><rect x="567" y="286" width="2" height="111" fill="#00ff00"/><rect x="567" y="396" width="2" height="2" fill="#ffff00"/><rect x="577" y="286" width="2" height="111" fill="#00ff00"/><rect x="577" y="396" width="2" height="2" fill="#ffff00"/><rect x="593" y="286" width="2" height="111" fill="#00ff00"/><rect x="593" y="396" width="2" height="2" fill="#ffff00"/><rect x="476" y="451" width="6" height="2" fill="#00ffff"/><rect x="480" y="451" width="2" height="112" fill="#00ffff"/><rect x="480" y="561" width="7" height="2" fill="#00ffff"/><rect x="485" y="451" width="5" height="2" fill="#00ffff"/><rect x="485" y="451" width="2" height="112" fill="#00ffff"/><rect x="488" y="451" width="2" height="112" fill="#00ffff"/><rect x="488" y="561" width="7" height="2" fill="#00ffff"/><rect x="493" y="451" width="4" height="2" fill="#00ffff"/><rect x="493" y="451" width="2" height="112" fill="#00ffff"/><rect x="495" y="451" width="2" height="112" fill="#00ffff"/><rect x="495" y="561" width="6" height="2" fill="#00ffff"/><rect x="499" y="451" width="5" height="2" fill="#00ffff"/><rect x="499" y="451" width="2" height="112" fill="#00ffff"/><rect x="502" y="451" width="2" height="112" fill="#00ffff"/><rect x="502" y="561" width="6" height="2" fill="#00ffff"/><rect x="506" y="451" width="5" height="2" fill="#00ffff"/><rect x="506" y="451" width="2" height="112" fill="#00ffff"/><rect x="509" y="451" width="2" height="112" fill="#00ffff"/><rect x="509" y="561" width="5" height="2" fill="#00ffff"/><rect x="512" y="451" width="5" height="2" fill="#00ffff"/><rect x="512" y="451" width="2" height="112" fill="#00ffff"/><rect x="515" y="451" width="2" height="112" fill="#00ffff"/><rect x="515" y="561" width="6" height="2" fill="#00ffff"/><rect x="519" y="451" width="4" height="2" fill="#00ffff"/><rect x="519" y="451" width="2" height="112" fill="#00ffff"/><rect x="521" y="451" width="2" height="112" fill="#00ffff"/><rect x="521" y="561" width="6" height="2" fill="#00ffff"/><rect x="525" y="451" width="4" height="2" fill="#00ffff"/><rect x="525" y="451" width="2" height="112" fill="#00ffff"/><rect x="527" y="451" width="2" height="112" fill="#00ffff"/><rect x="527" y="561" width="6" height="2" fill="#00ffff"/><rect x="531" y="451" width="5" height="2" fill="#00ffff"/><rect x="531" y="451" width="2" height="112" fill="#00ffff"/><rect x="534" y="451" width="2" height="112" fill="#00ffff"/><rect x="534" y="561" width="5" height="2" fill="#00ffff"/><rect x="537" y="451" width="5" height="2" fill="#00ffff"/><rect x="537" y="451" width="2" height="112" fill="#00ffff"/><rect x="540" y="451" width="2" height="112" fill="#00ffff"/><rect x="540" y="561" width="6" height="2" fill="#00ffff"/><rect x="544" y="451" width="4" height="2" fill="#00ffff"/><rect x="544" y="451" width="2" height="112" fill="#00ffff"/><rect x="546" y="451" width="2" height="112" fill="#00ffff"/><rect x="546" y="561" width="6" height="2" fill="#00ffff"/><rect x="550" y="451" width="4" height="2" fill="#00ffff"/><rect x="550" y="451" width="2" height="112" fill="#00ffff"/><rect x="552" y="451" width="2" height="112" fill="#00ffff"/><rect x="552" y="561" width="6" height="2" fill="#00ffff"/><rect x="556" y="451" width="5" height="2" fill="#00ffff"/><rect x="556" y="451" width="2" height="112" fill="#00ffff"/><rect x="559" y="451" width="2" height="112" fill="#00ffff"/><rect x="559" y="561" width="6" height="2" fill="#00ffff"/><rect x="563" y="451" width="4" height="2" fill="#00ffff"/><rect x="563" y="451" width="2" height="112" fill="#00ffff"/><rect x="565" y="451" width="2" height="112" fill="#00ffff"/><rect x="565" y="561" width="6" height="2" fill="#00ffff"/><rect x="569" y="451" width="4" height="2" fill="#00ffff"/><rect x="569" y="451" width="2" height="112" fill="#00ffff"/><rect x="571" y="451" width="2" height="112" fill="#00ffff"/><rect x="571" y="561" width="6" height="2" fill="#00ffff"/><rect x="575" y="451" width="5" height="2" fill="#00ffff"/><rect x="575" y="451" width="2" height="112" fill="#00ffff"/><rect x="578" y="451" width="2" height="112" fill="#00ffff"/><rect x="578" y="561" width="6" height="2" fill="#00ffff"/><rect x="582" y="451" width="4" height="2" fill="#00ffff"/><rect x="582" y="451" width="2" height="112" fill="#00ffff"/><rect x="584" y="451" width="2" height="112" fill="#00ffff"/><rect x="584" y="561" width="6" height="2" fill="#00ffff"/><rect x="588" y="451" width="5" height="2" fill="#00ffff"/><rect x="588" y="451" width="2" height="112" fill="#00ffff"/><rect x="591" y="451" width="2" height="112" fill="#00ffff"/><rect x="591" y="561" width="5" height="2" fill="#00ffff"/><rect x="594" y="451" width="2" height="2" fill="#00ffff"/><rect x="594" y="451" width="2" height="112" fill="#00ffff"/><rect x="594" y="451" width="2" height="112" fill="#00ffff"/><rect x="476" y="451" width="2.5" height="3" fill="#ffff00"/><rect x="480" y="561" width="2.5" height="3" fill="#ffff00"/><rect x="485" y="451" width="2.5" height="3" fill="#ffff00"/><rect x="488" y="561" width="2.5" height="3" fill="#ffff00"/><rect x="493" y="451" width="2.5" height="3" fill="#ffff00"/><rect x="495" y="561" width="2.5" height="3" fill="#ffff00"/><rect x="499" y="451" width="2.5" height="3" fill="#ffff00"/><rect x="502" y="561" width="2.5" height="3" fill="#ffff00"/><rect x="506" y="451" width="2.5" height="3" fill="#ffff00"/><rect x="509" y="561" width="2.5" height="3" fill="#ffff00"/><rect x="512" y="451" width="2.5" height="3" fill="#ffff00"/><rect x="515" y="561" width="2.5" height="3" fill="#ffff00"/><rect x="519" y="451" width="2.5" height="3" fill="#ffff00"/><rect x="521" y="561" width="2.5" height="3" fill="#ffff00"/><rect x="525" y="451" width="2.5" height="3" fill="#ffff00"/><rect x="527" y="561" width="2.5" height="3" fill="#ffff00"/><rect x="531" y="451" width="2.5" height="3" fill="#ffff00"/><rect x="534" y="561" width="2.5" height="3" fill="#ffff00"/><rect x="537" y="451" width="2.5" height="3" fill="#ffff00"/><rect x="540" y="561" width="2.5" height="3" fill="#ffff00"/><rect x="544" y="451" width="2.5" height="3" fill="#ffff00"/><rect x="546" y="561" width="2.5" height="3" fill="#ffff00"/><rect x="550" y="451" width="2.5" height="3" fill="#ffff00"/><rect x="552" y="561" width="2.5" height="3" fill="#ffff00"/><rect x="556" y="451" width="2.5" height="3" fill="#ffff00"/><rect x="559" y="561" width="2.5" height="3" fill="#ffff00"/><rect x="563" y="451" width="2.5" height="3" fill="#ffff00"/><rect x="565" y="561" width="2.5" height="3" fill="#ffff00"/><rect x="569" y="451" width="2.5" height="3" fill="#ffff00"/><rect x="571" y="561" width="2.5" height="3" fill="#ffff00"/><rect x="575" y="451" width="2.5" height="3" fill="#ffff00"/><rect x="578" y="561" width="2.5" height="3" fill="#ffff00"/><rect x="582" y="451" width="2.5" height="3" fill="#ffff00"/><rect x="584" y="561" width="2.5" height="3" fill="#ffff00"/><rect x="588" y="451" width="2.5" height="3" fill="#ffff00"/><rect x="591" y="561" width="2.5" height="3" fill="#ffff00"/><rect x="594" y="451" width="2.5" height="3" fill="#ffff00"/><rect x="594" y="561" width="2.5" height="3" fill="#ffff00"/><rect x="476" y="643" width="120" height="2" fill="#ff0000"/><rect x="476" y="617" width="2" height="27" fill="#ff0000"/><rect x="480" y="617" width="2" height="27" fill="#ff0000"/><rect x="485" y="617" width="2" height="27" fill="#ff0000"/><rect x="488" y="617" width="2" height="27" fill="#ff0000"/><rect x="491" y="617" width="6" height="27" fill="#ff0000"/><rect x="499" y="617" width="5" height="27" fill="#ff0000"/><rect x="480" y="232" width="1" height="440" fill="#fff"/><rect x="477" y="249" width="878" height="1" fill="#fff"/></svg>
<div style="left:1129px;top:678px;width:231px;height:21px;background:#888888;"></div>
<svg style="left:1129px;top:678px" width="231" height="21"><circle cx="11" cy="9" r="4.5" fill="none" stroke="#111" stroke-width="1.2"/><path d="M7.5 12.5 L3.5 17" stroke="#111" stroke-width="1.8"/><path d="M9 9 H13" stroke="#111" stroke-width="1.2"/><circle cx="33" cy="9" r="4.5" fill="none" stroke="#111" stroke-width="1.2"/><path d="M29.5 12.5 L25.5 17" stroke="#111" stroke-width="1.8"/><path d="M31 9 H35 M33 7 V11" stroke="#111" stroke-width="1.2"/><path d="M152 4.5 H155 V17.5 H152 Z M164 4.5 V17.5 L155 11 Z" fill="#111"/><path d="M179 4.5 V17.5 L173 11 Z M185 4.5 V17.5 L179 11 Z" fill="#111"/><path d="M194 4.5 V17.5 L200 11 Z M200 4.5 V17.5 L206 11 Z" fill="#111"/><path d="M215 4.5 V17.5 L224 11 Z M224 4.5 H227 V17.5 H224 Z" fill="#111"/></svg>
<div style="left:0px;top:705px;width:1366px;height:23px;background:#eeeeee;"></div>
<div style="left:0px;top:705px;width:345px;height:1px;background:#8a8a8a;"></div>
<div style="left:1px;top:706px;width:1px;height:21px;background:#8a8a8a;"></div>
<div style="left:345px;top:706px;width:1px;height:21px;background:#fff;"></div>
<div style="left:0px;top:726px;width:346px;height:1px;background:#fff;"></div>
<div style="left:347px;top:707px;width:612px;height:18px;border:1px solid #555;border-right-color:#bbb;border-bottom-color:#bbb;background:#fff;"></div>
<div style="left:350px;top:710px;width:606px;height:12px;background:#0a78f0;border-top:1px solid #20a0ff;border-bottom:1px solid #0050c0;"></div>
<div style="left:959px;top:706px;width:1px;height:21px;background:#8a8a8a;"></div>
<div style="left:960px;top:705px;width:385px;height:1px;background:#8a8a8a;"></div>
<div style="left:1304px;top:706px;width:2px;height:21px;background:#8a8a8a;"></div>
<div style="left:1345px;top:706px;width:1px;height:21px;background:#fff;"></div>
<svg style="left:1308px;top:712px" width="34" height="8"><rect x="0" y="0" width="16" height="8" fill="#8a8a8a"/><rect x="18" y="0" width="16" height="8" fill="#8a8a8a"/><circle cx="4" cy="4" r="3" fill="#660000"/><circle cx="12" cy="4" r="3" fill="#006600"/><circle cx="22" cy="4" r="3" fill="#660000"/><circle cx="30" cy="4" r="3" fill="#006600"/></svg>
<svg style="left:1354px;top:713px" width="10" height="10"><rect x="7" y="1" width="1" height="1" fill="#999"/><rect x="3" y="5" width="1" height="1" fill="#999"/><rect x="7" y="5" width="1" height="1" fill="#999"/><rect x="0" y="9" width="1" height="1" fill="#999"/><rect x="3" y="9" width="1" height="1" fill="#999"/><rect x="7" y="9" width="1" height="1" fill="#999"/></svg>
<div style="left:0px;top:728px;width:1366px;height:40px;background:linear-gradient(95deg,#8f4b35 0%,#97533c 25%,#8c4832 45%,#94503a 70%,#8c4731 90%,#7a3a24 100%);"></div>
<svg style="left:0;top:728px;overflow:hidden" width="1366" height="40"><g fill="none" stroke="#6e3220" stroke-linecap="round" opacity="0.28"><path d="M440 2 Q470 20 520 38" stroke-width="5"/><path d="M560 0 Q590 18 600 40" stroke-width="4"/><path d="M470 30 Q520 10 575 6" stroke-width="3"/><path d="M700 40 Q730 20 760 0" stroke-width="4"/><path d="M1000 40 Q1020 15 1050 0" stroke-width="6"/><path d="M1060 40 Q1080 20 1110 2" stroke-width="4"/><path d="M1120 10 Q1160 30 1200 38" stroke-width="3"/><path d="M1230 40 Q1260 10 1300 0" stroke-width="5"/></g><path d="M1300 40 L1366 0 V40 Z" fill="#7a3a22" opacity="0.6"/></svg>
<div style="left:0px;top:728px;width:48px;height:40px;background:#8e4522;"></div>
<svg style="left:16px;top:739px" width="16" height="17"><path d="M0 2 L6 1.1 V8 H0 Z M7 1 L16 0 V8 H7 Z M0 9 H6 V15.9 L0 15 Z M7 9 H16 V17 L7 16 Z" fill="#fff"/></svg>
<div style="left:48px;top:728px;width:344px;height:40px;background:#9e5e47;"></div>
<svg style="left:57px;top:737px" width="22" height="22"><circle cx="11" cy="11" r="9.2" fill="none" stroke="#fff" stroke-width="2.3"/></svg>
<svg style="left:364px;top:738px" width="14" height="20"><rect x="4.5" y="1" width="5" height="11" rx="2.5" fill="none" stroke="#e6d0c6" stroke-width="1.1"/><path d="M1.5 8 Q1.5 15 7 15 Q12.5 15 12.5 8 M7 15 V19 M4 19 H10" fill="none" stroke="#e6d0c6" stroke-width="1.1"/></svg>
<svg style="left:405px;top:738px" width="22" height="20"><rect x="4.5" y="3.5" width="13" height="13" fill="none" stroke="#fff" stroke-width="1.3"/><path d="M1.5 5 V15 M20.5 5 V15" stroke="#fff" stroke-width="1.3"/></svg>
<svg style="left:455px;top:737px" width="24" height="22"><rect x="8" y="4" width="15" height="13" fill="#2a7bd3"/><path d="M9 6 L15 11 L22 6" stroke="#fff" stroke-width="1.5" fill="none"/><path d="M0 3 L12 0 V22 L0 19 Z" fill="#0a64c0"/><ellipse cx="6" cy="11" rx="3" ry="4" fill="none" stroke="#fff" stroke-width="1.8"/></svg>
<svg style="left:506px;top:737px" width="22" height="22"><path d="M20 14 H6 Q6 19 12 19 Q16 19 19 17 V21 Q15 23 11 22 Q2 20 2 12 Q2 3 11 2 Q20 2 20 11 Z M6 10 H15 Q15 6 11 6 Q7 6 6 10 Z" fill="#1a8ce8"/></svg>
<svg style="left:555px;top:738px" width="22" height="20"><path d="M0 2 H8 L10 4 H22 V20 H0 Z" fill="#f0c75a"/><rect x="0" y="6" width="22" height="14" fill="#f8dc84"/><rect x="7" y="11" width="8" height="4" fill="#2b8ad8"/><rect x="9" y="15" width="4" height="4" fill="#2b8ad8"/></svg>
<svg style="left:603px;top:736px" width="22" height="24"><path d="M7 6 Q7 1 11 1 Q15 1 15 6" fill="none" stroke="#fff" stroke-width="1.5"/><path d="M1 6 H21 V23 H1 Z" fill="#fff"/><path d="M6 10 H10.5 V14.5 H6 Z M11.5 10 H16 V14.5 H11.5 Z M6 15.5 H10.5 V20 H6 Z M11.5 15.5 H16 V20 H11.5 Z" fill="#8e4a34"/></svg>
<svg style="left:650px;top:737px" width="22" height="22"><defs><radialGradient id="ffg" cx="0.6" cy="0.35" r="0.6"><stop offset="0" stop-color="#60b8f0"/><stop offset="1" stop-color="#1a4aa8"/></radialGradient><linearGradient id="ffo" x1="0" y1="0" x2="0.3" y2="1"><stop offset="0" stop-color="#f8c030"/><stop offset="0.5" stop-color="#f07020"/><stop offset="1" stop-color="#d84010"/></linearGradient></defs><circle cx="12" cy="10" r="8.5" fill="url(#ffg)"/><path d="M3 4 Q1 9 2 13 Q4 20 11 21 Q18 21 21 15 Q22 11 20 7 Q20 13 15 16 Q9 18 6 13 Q5 10 7 8 Q9 7 11 8 Q10 6 7 6 Q8 4 10 3 Q6 2 3 4 Z" fill="url(#ffo)"/></svg>
<div style="left:643px;top:766px;width:152px;height:2px;background:#d8a090;"></div>
<div style="left:800px;top:728px;width:160px;height:40px;background:linear-gradient(to right,#a84c2c,#b4552f 20%,#b0522e);"></div>
<svg style="left:814px;top:740px" width="16" height="16" viewBox="0 0 16 16">
<rect x="0.5" y="0.5" width="9" height="11" fill="#efe3a8" stroke="#c9b870" stroke-width="0.6"/><rect x="2.5" y="2" width="9.5" height="11" fill="#5b9bd5" stroke="#2f6db5" stroke-width="0.6"/>
<rect x="4.5" y="3.5" width="2" height="2.5" fill="#1f4f98"/><rect x="8" y="3.5" width="1" height="3" fill="#dde"/>
<path d="M7 12.5 h5" stroke="#d8d8d8" stroke-width="1.8"/><circle cx="5.8" cy="12.5" r="1.8" fill="none" stroke="#d0d0d0" stroke-width="1.3"/><circle cx="13.4" cy="12.5" r="1.8" fill="none" stroke="#d0d0d0" stroke-width="1.3"/></svg>
<div style="left:800px;top:766px;width:160px;height:2px;background:#e0a898;"></div>
<svg style="left:971px;top:736px" width="24" height="24"><rect x="0.5" y="0.5" width="23" height="23" fill="#fff" stroke="#111" stroke-width="1.5"/><path d="M3 14 L8 6 L12 12 L19 4" stroke="#e02020" stroke-width="2" fill="none"/><path d="M3 18 L9 10 L14 16 L21 8" stroke="#2040e0" stroke-width="2" fill="none"/><path d="M3 21 L10 14 L15 19 L21 13" stroke="#e8e020" stroke-width="2" fill="none"/><path d="M3 10 L8 4 L13 9 L20 2" stroke="#20c020" stroke-width="2" fill="none"/></svg>
<div style="left:965px;top:766px;width:151px;height:2px;background:#d8a090;"></div>
<svg style="left:1144px;top:738px" width="18" height="19"><g fill="none" stroke="#fff" stroke-width="1.1"><circle cx="12.3" cy="4.4" r="2.6"/><path d="M9.3 10.2 Q10 7.6 12.3 7.6 Q14.8 7.6 15.8 10.6"/><circle cx="6" cy="9.6" r="2.6"/><path d="M2.3 17 Q3 13 6 13 Q9 13 9.9 17"/></g></svg>
<svg style="left:1182px;top:742px" width="14" height="9"><path d="M1 8 L7 2 L13 8" fill="none" stroke="#fff" stroke-width="1.2"/></svg>
<svg style="left:1206px;top:741px" width="16" height="16"><g fill="none" stroke="#fff" stroke-width="1.1"><path d="M1.5 13 A11 11 0 0 1 12.5 2"/><path d="M5 13 A7.5 7.5 0 0 1 12.5 5.5"/><path d="M8.5 13 A4 4 0 0 1 12.5 9"/></g><circle cx="12.5" cy="12.5" r="1.4" fill="#fff"/></svg>
<svg style="left:1228px;top:740px" width="20" height="16"><path d="M1.5 5 H4.5 L8 1.5 V14 L4.5 10.5 H1.5 Z" fill="none" stroke="#fff" stroke-width="1.1"/><path d="M10.5 5.5 Q11.8 7.75 10.5 10" fill="none" stroke="#fff" stroke-width="1"/><path d="M13 3.5 Q15.2 7.75 13 12" fill="none" stroke="#d8b8a8" stroke-width="1"/><path d="M15.5 1.5 Q18.5 7.75 15.5 14" fill="none" stroke="#c8a090" stroke-width="1"/></svg>
<svg style="left:1325px;top:740px" width="17" height="17"><path d="M0.5 0.5 H15.5 V11.5 H10 L8 14 L6 11.5 H0.5 Z" fill="none" stroke="#fff" stroke-width="1"/></svg>
<div style="left:1361px;top:728px;width:1px;height:40px;background:#b87868;"></div>
<svg style="left:0;top:0" width="1366" height="768"><text x="22.799999999999997" y="15.8" font-family="Liberation Sans" font-size="12" font-weight="normal" fill="#fff" text-anchor="start" textLength="313.8" lengthAdjust="spacingAndGlyphs">TunerStudio MS(Beta) v3.0.28 - Temp Car (MS3 1.5.0 release</text><text x="350.59999999999997" y="15.8" font-family="Liberation Sans" font-size="12" font-weight="normal" fill="#fff" text-anchor="start" textLength="357.5" lengthAdjust="spacingAndGlyphs">20170116 19:37GMT (c) JSM/KC ********) Registered to: Ace Swerling</text><text x="5.5" y="41.8" font-family="Liberation Sans" font-size="11" font-weight="bold" fill="#333" text-anchor="start" textLength="19.7" lengthAdjust="spacingAndGlyphs">File</text><text x="36.699999999999996" y="41.8" font-family="Liberation Sans" font-size="11" font-weight="bold" fill="#333" text-anchor="start" textLength="43.0" lengthAdjust="spacingAndGlyphs">Options</text><text x="91.30000000000001" y="41.8" font-family="Liberation Sans" font-size="11" font-weight="bold" fill="#333" text-anchor="start" textLength="71.8" lengthAdjust="spacingAndGlyphs">Data Logging</text><text x="174.5" y="41.8" font-family="Liberation Sans" font-size="11" font-weight="bold" fill="#333" text-anchor="start" textLength="94.6" lengthAdjust="spacingAndGlyphs">Communications</text><text x="281.7" y="41.8" font-family="Liberation Sans" font-size="11" font-weight="bold" fill="#333" text-anchor="start" textLength="31.3" lengthAdjust="spacingAndGlyphs">Tools</text><text x="324.59999999999997" y="41.8" font-family="Liberation Sans" font-size="11" font-weight="bold" fill="#333" text-anchor="start" textLength="24.9" lengthAdjust="spacingAndGlyphs">Help</text><text x="1239.4" y="41" font-family="Liberation Sans" font-size="12" font-weight="normal" fill="#8a8a8a" text-anchor="start" textLength="34.2" lengthAdjust="spacingAndGlyphs">Search</text><text x="15.500000000000002" y="67.2" font-family="Liberation Sans" font-size="11.5" font-weight="bold" fill="#333" text-anchor="start" textLength="36.7" lengthAdjust="spacingAndGlyphs">Device</text><text x="18.7" y="85.7" font-family="Liberation Sans" font-size="11.5" font-weight="bold" fill="#333" text-anchor="start" textLength="54.8" lengthAdjust="spacingAndGlyphs">Temp Car</text><text x="150.79999999999998" y="71.1" font-family="Liberation Sans" font-size="11.5" font-weight="bold" fill="#333" text-anchor="start" textLength="59.8" lengthAdjust="spacingAndGlyphs">Basic/Load</text><text x="157.79999999999998" y="85.7" font-family="Liberation Sans" font-size="11.5" font-weight="bold" fill="#333" text-anchor="start" textLength="45.8" lengthAdjust="spacingAndGlyphs">Settings</text><text x="297.59999999999997" y="71.1" font-family="Liberation Sans" font-size="11.5" font-weight="bold" fill="#333" text-anchor="start" textLength="25.2" lengthAdjust="spacingAndGlyphs">Fuel</text><text x="287.59999999999997" y="85.7" font-family="Liberation Sans" font-size="11.5" font-weight="bold" fill="#333" text-anchor="start" textLength="45.2" lengthAdjust="spacingAndGlyphs">Settings</text><text x="420.5" y="71.1" font-family="Liberation Sans" font-size="11.5" font-weight="bold" fill="#333" text-anchor="start" textLength="41.4" lengthAdjust="spacingAndGlyphs">Ignition</text><text x="418.25" y="85.7" font-family="Liberation Sans" font-size="11.5" font-weight="bold" fill="#333" text-anchor="start" textLength="45.9" lengthAdjust="spacingAndGlyphs">Settings</text><text x="526.9" y="79.2" font-family="Liberation Sans" font-size="11.5" font-weight="bold" fill="#333" text-anchor="start" textLength="63.2" lengthAdjust="spacingAndGlyphs">Startup/Idle</text><text x="648.75" y="79.2" font-family="Liberation Sans" font-size="11.5" font-weight="bold" fill="#333" text-anchor="start" textLength="67.3" lengthAdjust="spacingAndGlyphs">Accel Enrich</text><text x="782.85" y="79.2" font-family="Liberation Sans" font-size="11.5" font-weight="bold" fill="#333" text-anchor="start" textLength="58.3" lengthAdjust="spacingAndGlyphs">Boost/VVT</text><text x="919.4" y="71.1" font-family="Liberation Sans" font-size="11.5" font-weight="bold" fill="#333" text-anchor="start" textLength="32.2" lengthAdjust="spacingAndGlyphs">Table</text><text x="913.4" y="85.7" font-family="Liberation Sans" font-size="11.5" font-weight="bold" fill="#333" text-anchor="start" textLength="44.2" lengthAdjust="spacingAndGlyphs">choices</text><text x="1036.8" y="71.1" font-family="Liberation Sans" font-size="11.5" font-weight="bold" fill="#333" text-anchor="start" textLength="54.4" lengthAdjust="spacingAndGlyphs">Advanced</text><text x="1045.35" y="85.7" font-family="Liberation Sans" font-size="11.5" font-weight="bold" fill="#333" text-anchor="start" textLength="37.3" lengthAdjust="spacingAndGlyphs">Engine</text><text x="1159.2" y="71.1" font-family="Liberation Sans" font-size="11.5" font-weight="bold" fill="#333" text-anchor="start" textLength="57.2" lengthAdjust="spacingAndGlyphs">3D Tuning</text><text x="1172.7" y="85.7" font-family="Liberation Sans" font-size="11.5" font-weight="bold" fill="#333" text-anchor="start" textLength="30.2" lengthAdjust="spacingAndGlyphs">Maps</text><text x="1288.25" y="71.1" font-family="Liberation Sans" font-size="11.5" font-weight="bold" fill="#333" text-anchor="start" textLength="51.9" lengthAdjust="spacingAndGlyphs">CAN-bus/</text><text x="1282.45" y="85.7" font-family="Liberation Sans" font-size="11.5" font-weight="bold" fill="#333" text-anchor="start" textLength="63.5" lengthAdjust="spacingAndGlyphs">Testmodes</text><text x="12.6" y="113" font-family="Liberation Sans" font-size="11.5" font-weight="bold" fill="#333" text-anchor="start" textLength="79.9" lengthAdjust="spacingAndGlyphs">Gauge Cluster</text><text x="112.10000000000001" y="113" font-family="Liberation Sans" font-size="11.5" font-weight="bold" fill="#8c9aaa" text-anchor="start" textLength="116.7" lengthAdjust="spacingAndGlyphs">Tuning &amp; Dyno Views</text><text x="250.0" y="113" font-family="Liberation Sans" font-size="11.5" font-weight="bold" fill="#8c9aaa" text-anchor="start" textLength="109.2" lengthAdjust="spacingAndGlyphs">Graphing &amp; Logging</text><text x="379.9" y="113" font-family="Liberation Sans" font-size="11.5" font-weight="bold" fill="#333" text-anchor="start" textLength="189.7" lengthAdjust="spacingAndGlyphs">Diagnostics &amp; High Speed Loggers</text><text x="590.8" y="113" font-family="Liberation Sans" font-size="11.5" font-weight="bold" fill="#333" text-anchor="start" textLength="186.1" lengthAdjust="spacingAndGlyphs">Tune Analyze Live! - Tune For You</text><text x="797.6999999999999" y="113" font-family="Liberation Sans" font-size="11.5" font-weight="bold" fill="#333" text-anchor="start" textLength="31.9" lengthAdjust="spacingAndGlyphs">Notes</text><text x="14.8" y="140.8" font-family="Liberation Sans" font-size="11.5" font-weight="bold" fill="#333" text-anchor="start" textLength="105.5" lengthAdjust="spacingAndGlyphs">High Speed Logger</text><text x="11.8" y="160.8" font-family="Liberation Sans" font-size="11.5" font-weight="bold" fill="#333" text-anchor="start" textLength="134.8" lengthAdjust="spacingAndGlyphs">Ignition Logger Controls</text><text x="38.9" y="187.8" font-family="Liberation Sans" font-size="11.5" font-weight="bold" fill="#333" text-anchor="start" textLength="73.7" lengthAdjust="spacingAndGlyphs">Logger Type:</text><text x="119.4" y="187.2" font-family="Liberation Sans" font-size="11.5" font-weight="bold" fill="#333" text-anchor="start" textLength="104.7" lengthAdjust="spacingAndGlyphs">Composite Logger</text><text x="284.29999999999995" y="187.7" font-family="Liberation Sans" font-size="11.5" font-weight="bold" fill="#a0a0a0" text-anchor="start" textLength="26.5" lengthAdjust="spacingAndGlyphs">Start</text><text x="349.4" y="187.7" font-family="Liberation Sans" font-size="11.5" font-weight="bold" fill="#333" text-anchor="start" textLength="25.0" lengthAdjust="spacingAndGlyphs">Stop</text><text x="412.79999999999995" y="187.7" font-family="Liberation Sans" font-size="11.5" font-weight="bold" fill="#333" text-anchor="start" textLength="29.0" lengthAdjust="spacingAndGlyphs">Clear</text><text x="467.29999999999995" y="187.2" font-family="Liberation Sans" font-size="11.5" font-weight="bold" fill="#b8cfe5" text-anchor="start" textLength="44.8" lengthAdjust="spacingAndGlyphs">1000 ms</text><text x="558.6" y="187.7" font-family="Liberation Sans" font-size="11.5" font-weight="bold" fill="#333" text-anchor="start" textLength="43.2" lengthAdjust="spacingAndGlyphs">Options</text><text x="640.6" y="187.7" font-family="Liberation Sans" font-size="11.5" font-weight="bold" fill="#333" text-anchor="start" textLength="19.3" lengthAdjust="spacingAndGlyphs">File</text><text x="702.6999999999999" y="187.7" font-family="Liberation Sans" font-size="11.5" font-weight="bold" fill="#333" text-anchor="start" textLength="101.9" lengthAdjust="spacingAndGlyphs">Capture to log file:</text><text x="10" y="223.7" font-family="Liberation Sans" font-size="12" font-weight="bold" fill="#fff" text-anchor="start" letter-spacing="0.3">9000</text><text x="10" y="253.9" font-family="Liberation Sans" font-size="12" font-weight="bold" fill="#fff" text-anchor="start" letter-spacing="0.3">4500</text><text x="10" y="297" font-family="Liberation Sans" font-size="12" font-weight="bold" fill="#fff" text-anchor="start" letter-spacing="0.3">0</text><text x="176.2" y="223.3" font-family="Liberation Sans" font-size="12" font-weight="bold" fill="#fff" text-anchor="start" textLength="111.6" lengthAdjust="spacingAndGlyphs">Engine Speed(RPM)</text><text x="384.2" y="247.8" font-family="Liberation Sans" font-size="12" font-weight="bold" fill="#fff" text-anchor="middle" letter-spacing="0.3">0</text><text x="10" y="312.7" font-family="Liberation Sans" font-size="12" font-weight="bold" fill="#fff" text-anchor="start" letter-spacing="0.3">400</text><text x="10" y="342.9" font-family="Liberation Sans" font-size="12" font-weight="bold" fill="#fff" text-anchor="start" letter-spacing="0.3">200</text><text x="10" y="386" font-family="Liberation Sans" font-size="12" font-weight="bold" fill="#fff" text-anchor="start" letter-spacing="0.3">0</text><text x="183.15" y="312.3" font-family="Liberation Sans" font-size="12" font-weight="bold" fill="#fff" text-anchor="start" textLength="97.7" lengthAdjust="spacingAndGlyphs">Engine MAP(kPa)</text><text x="384.2" y="336.8" font-family="Liberation Sans" font-size="12" font-weight="bold" fill="#fff" text-anchor="middle" letter-spacing="0.3">100.0</text><text x="10" y="400.7" font-family="Liberation Sans" font-size="12" font-weight="bold" fill="#fff" text-anchor="start" letter-spacing="0.3">19.40</text><text x="10" y="430.9" font-family="Liberation Sans" font-size="12" font-weight="bold" fill="#fff" text-anchor="start" letter-spacing="0.3">14.70</text><text x="10" y="474" font-family="Liberation Sans" font-size="12" font-weight="bold" fill="#fff" text-anchor="start" letter-spacing="0.3">10.00</text><text x="189.4" y="400.3" font-family="Liberation Sans" font-size="12" font-weight="bold" fill="#fff" text-anchor="start" textLength="85.2" lengthAdjust="spacingAndGlyphs">Air:Fuel Ratio 1</text><text x="384.2" y="424.8" font-family="Liberation Sans" font-size="12" font-weight="bold" fill="#fff" text-anchor="middle" letter-spacing="0.3">7.70</text><text x="10" y="489.7" font-family="Liberation Sans" font-size="12" font-weight="bold" fill="#fff" text-anchor="start" letter-spacing="0.3">150.0</text><text x="10" y="519.9" font-family="Liberation Sans" font-size="12" font-weight="bold" fill="#fff" text-anchor="start" letter-spacing="0.3">100.0</text><text x="10" y="563" font-family="Liberation Sans" font-size="12" font-weight="bold" fill="#fff" text-anchor="start" letter-spacing="0.3">50.0</text><text x="174.4" y="489.3" font-family="Liberation Sans" font-size="12" font-weight="bold" fill="#fff" text-anchor="start" textLength="115.2" lengthAdjust="spacingAndGlyphs">EGO Correction 1(%)</text><text x="384.2" y="513.8" font-family="Liberation Sans" font-size="12" font-weight="bold" fill="#fff" text-anchor="middle" letter-spacing="0.3">100.0</text><text x="10" y="577.7" font-family="Liberation Sans" font-size="12" font-weight="bold" fill="#fff" text-anchor="start" letter-spacing="0.3">150.0</text><text x="10" y="607.9" font-family="Liberation Sans" font-size="12" font-weight="bold" fill="#fff" text-anchor="start" letter-spacing="0.3">100.0</text><text x="10" y="651" font-family="Liberation Sans" font-size="12" font-weight="bold" fill="#fff" text-anchor="start" letter-spacing="0.3">50.0</text><text x="174.4" y="577.3" font-family="Liberation Sans" font-size="12" font-weight="bold" fill="#fff" text-anchor="start" textLength="115.2" lengthAdjust="spacingAndGlyphs">EGO Correction 2(%)</text><text x="384.2" y="601.8" font-family="Liberation Sans" font-size="12" font-weight="bold" fill="#fff" text-anchor="middle" letter-spacing="0.3">100.0</text><text x="16.7" y="671" font-family="Liberation Sans" font-size="11.5" font-weight="bold" fill="#333" text-anchor="start" textLength="42.2" lengthAdjust="spacingAndGlyphs">Gauges</text><text x="79.60000000000001" y="671" font-family="Liberation Sans" font-size="11.5" font-weight="bold" fill="#333" text-anchor="start" textLength="55.0" lengthAdjust="spacingAndGlyphs">Data View</text><text x="155.8" y="671" font-family="Liberation Sans" font-size="11.5" font-weight="bold" fill="#333" text-anchor="start" textLength="77.2" lengthAdjust="spacingAndGlyphs">Raw Log Page</text><text x="834.0" y="226.6" font-family="Liberation Sans" font-size="19.5" font-weight="normal" fill="#dcdcdc" text-anchor="start" textLength="162.1" lengthAdjust="spacingAndGlyphs">Composite Logger</text><text x="526.1999999999999" y="242.5" font-family="Liberation Sans" font-size="10.5" font-weight="normal" fill="#fff" text-anchor="start" textLength="57.4" lengthAdjust="spacingAndGlyphs">X: 325.4 ms</text><text x="526.1999999999999" y="253.9" font-family="Liberation Sans" font-size="10.5" font-weight="normal" fill="#fff" text-anchor="start" textLength="29.4" lengthAdjust="spacingAndGlyphs">Y: 2.0</text><text x="1198.3000000000002" y="692.6" font-family="Liberation Sans" font-size="11.5" font-weight="bold" fill="#3c4450" text-anchor="start" textLength="7.3" lengthAdjust="spacingAndGlyphs">2</text><text x="1217.4" y="692.6" font-family="Liberation Sans" font-size="11.5" font-weight="bold" fill="#3c4450" text-anchor="start" textLength="12.2" lengthAdjust="spacingAndGlyphs">of</text><text x="1240.1000000000001" y="692.6" font-family="Liberation Sans" font-size="11.5" font-weight="bold" fill="#3c4450" text-anchor="start" textLength="7.5" lengthAdjust="spacingAndGlyphs">2</text><text x="4.300000000000001" y="721.1" font-family="Liberation Sans" font-size="11.5" font-weight="bold" fill="#333" text-anchor="start" textLength="218.1" lengthAdjust="spacingAndGlyphs">Temp Car: Updated quick runtime table.</text><text x="961.6999999999999" y="720.5" font-family="Liberation Sans" font-size="11.5" font-weight="bold" fill="#333" text-anchor="start" textLength="134.1" lengthAdjust="spacingAndGlyphs">CAN1_CurrentTune.msq</text><text x="87.9" y="753.5" font-family="Liberation Sans" font-size="15" font-weight="normal" fill="#e6d0c6" text-anchor="start" textLength="127.2" lengthAdjust="spacingAndGlyphs">Type here to search</text><text x="676.9" y="752" font-family="Liberation Sans" font-size="12" font-weight="normal" fill="#fff" text-anchor="start" textLength="105.4" lengthAdjust="spacingAndGlyphs">MS3 Won't Start - ...</text><text x="838.6" y="752" font-family="Liberation Sans" font-size="12" font-weight="normal" fill="#fff" text-anchor="start" textLength="110.7" lengthAdjust="spacingAndGlyphs">TunerStudio MS(Be...</text><text x="998.6" y="752" font-family="Liberation Sans" font-size="12" font-weight="normal" fill="#fff" text-anchor="start" textLength="106.6" lengthAdjust="spacingAndGlyphs">MegaLogViewer H...</text><text x="1259.4" y="742.7" font-family="Liberation Sans" font-size="12" font-weight="normal" fill="#fff" text-anchor="start" textLength="43.2" lengthAdjust="spacingAndGlyphs">8:03 PM</text><text x="1254.1000000000001" y="760.6" font-family="Liberation Sans" font-size="12" font-weight="normal" fill="#fff" text-anchor="start" textLength="53.5" lengthAdjust="spacingAndGlyphs">8/26/2017</text></svg>
</body></html>
